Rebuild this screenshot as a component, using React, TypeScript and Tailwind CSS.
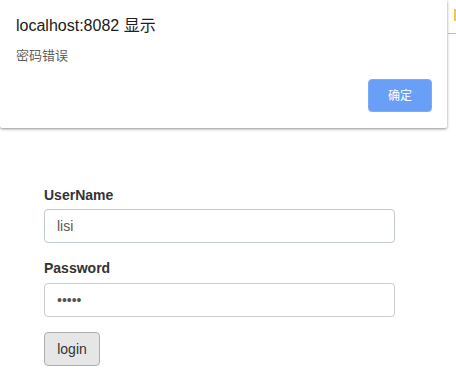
import { useState } from 'react'

const FONT = { fontFamily: '"Liberation Sans", Arial, "Noto Sans CJK SC", sans-serif' }

function AlertDialog({ onClose }: { onClose: () => void }) {
  return (
    <div className="absolute left-0 top-0 w-[447px] h-[128px] bg-white rounded-b-[2px] shadow-[0_1px_3px_rgba(0,0,0,0.45)] flex flex-col px-4 pt-[16px] pb-[16px]">
      <div className="text-[16px] leading-[20px] text-[#202020]">localhost:8082 显示</div>
      <div className="mt-[12px] text-[13px] leading-[16px] text-[#5f5f5f]">密码错误</div>
      <div className="mt-auto flex justify-end">
        <button
          onClick={onClose}
          className="w-[64px] h-[33px] rounded-[4px] bg-[#6a9ff8] border border-[#7eabf5] text-white text-[12px] mr-[-1px]"
        >
          确定
        </button>
      </div>
    </div>
  )
}

export default function App() {
  const [showAlert, setShowAlert] = useState(true)

  return (
    <div className="relative w-[456px] h-[375px] bg-white overflow-hidden" style={FONT}>
      {/* bits of the page peeking out on the right */}
      <div className="absolute left-[454px] top-[9px] w-[2px] h-[12px] bg-[#f2c84b]" />
      <div className="absolute left-[448px] top-[33px] w-[8px] h-[1px] bg-[#bdbdbd]" />

      <form className="pt-[185px] pl-[44px] w-[395px] box-content" onSubmit={e => e.preventDefault()}>
        <label className="block text-[14px] leading-[20px] font-bold text-[#333] mb-[4px]">UserName</label>
        <input
          defaultValue="lisi"
          className="block w-[351px] h-[34px] px-[12px] border border-[#c3cad6] rounded-[4px] text-[14px] text-[#555] outline-none"
          style={FONT}
        />
        <label className="block mt-[15px] text-[14px] leading-[20px] font-bold text-[#333] mb-[5px]">Password</label>
        <input
          type="password"
          defaultValue="12345"
          className="block w-[351px] h-[34px] px-[12px] border border-[#ccc] rounded-[4px] text-[14px] text-[#555] outline-none"
          style={FONT}
        />
        <button
          type="submit"
          className="mt-[15px] h-[34px] w-[56px] rounded-[4px] border border-[#adadad] bg-[#e6e6e6] text-[14px] text-[#333]"
          onClick={() => setShowAlert(true)}
        >
          login
        </button>
      </form>

      {showAlert && <AlertDialog onClose={() => setShowAlert(false)} />}
    </div>
  )
}
